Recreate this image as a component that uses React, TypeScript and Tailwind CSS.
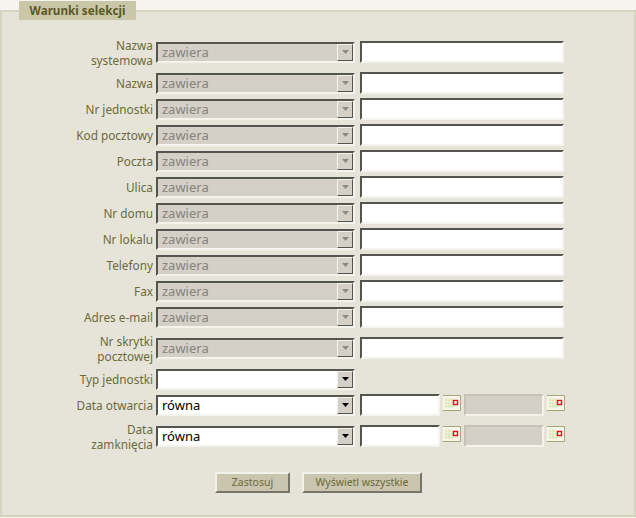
const font = "font-['Noto_Sans',Tahoma,sans-serif]";

function Arrow({ disabled }: { disabled?: boolean }) {
  return (
    <div className="flex h-full w-[16px] items-center justify-center border-t border-l border-t-[#f4f3ee] border-l-[#f4f3ee] border-r border-b border-r-[#55554f] border-b-[#55554f] bg-[#d4d0c8]">
      <svg width="7" height="4" viewBox="0 0 7 4">
        <path d="M0 0h7L3.5 4z" fill={disabled ? "#8d8a86" : "#000"} />
      </svg>
    </div>
  );
}

function Select({ value, disabled }: { value?: string; disabled?: boolean }) {
  return (
    <div
      className={
        "flex h-[21px] w-[199px] items-center justify-between border-2 border-t-[#55554f] border-l-[#55554f] border-r-[#f4f3ee] border-b-[#f4f3ee] pl-[4px] text-[13px] " +
        (disabled ? "bg-[#d4d0c8] text-[#85837c]" : "bg-white text-black")
      }
    >
      <span className="pt-[1px]">{value}</span>
      <Arrow disabled={disabled} />
    </div>
  );
}

function TextInput({ className }: { className: string }) {
  return (
    <div
      className={
        "h-[22px] border-2 border-t-[#55554f] border-l-[#55554f] border-r-[#f4f3ee] border-b-[#f4f3ee] bg-white " + className
      }
    />
  );
}

function CalendarIcon() {
  return (
    <svg width="18" height="16" viewBox="0 0 18 16" className="mb-[4px] shrink-0">
      <rect x="0" y="0" width="17" height="15" fill="#f6f6ea" />
      <path d="M3 3v10M6 3v10M9 3v10M2 5h8M2 8h8M2 11h13" stroke="#d8e4b0" />
      <path d="M0 .5h17.5V15.5H0" fill="none" stroke="#a8a678" />
      <rect x="10.5" y="5.5" width="4" height="4" fill="#fff" stroke="#ff0022" strokeWidth="1.4" />
    </svg>
  );
}

function Row({ label, tall, children }: { label: React.ReactNode; tall?: boolean; children: React.ReactNode }) {
  return (
    <div className={"flex items-center gap-[3px] " + (tall ? "h-[32px]" : "h-[22px]")}>
      <div className="w-[151px] pl-[70px] pt-[1px] text-right text-[11.8px] leading-[15px] text-[#6b6a3a]">{label}</div>
      {children}
    </div>
  );
}

function FullRow({ label, tall }: { label: string; tall?: boolean }) {
  return (
    <Row label={label} tall={tall}>
      <Select value="zawiera" disabled />
      <TextInput className="ml-[2px] w-[204px]" />
    </Row>
  );
}

function DateRow({ label, tall }: { label: string; tall?: boolean }) {
  return (
    <Row label={label} tall={tall}>
      <Select value="równa" />
      <TextInput className="ml-[2px] w-[80px]" />
      <CalendarIcon />
      <div className="h-[22px] w-[80px] border-2 border-t-[#c6c3b6] border-l-[#c6c3b6] border-r-[#f4f3ee] border-b-[#f4f3ee] bg-[#d4d0c8]" />
      <CalendarIcon />
    </Row>
  );
}

function Button({ label, className }: { label: string; className: string }) {
  return (
    <button
      className={
        "h-[21px] border-2 border-t-[#f2f1ea] border-l-[#f2f1ea] border-r-[#77756a] border-b-[#77756a] bg-[#c9c5ae] text-[10.5px] leading-none text-[#6b6a3a] " +
        className
      }
    >
      {label}
    </button>
  );
}

export default function App() {
  return (
    <div className={"h-[518px] w-[636px] overflow-hidden bg-[#f5f4ee] pt-[10px] " + font}>
      <div className="h-[507px] w-[636px] border-2 border-[#d6d3c0] bg-[#e6e4d8]">
        <div className="-mt-[11px] ml-[17px] flex h-[19px] w-[117px] items-center justify-center bg-[#cac7a9] text-[11.7px] font-bold text-[#5a5a25]">
          Warunki selekcji
        </div>
        <div className="mt-[16px] flex flex-col gap-[4px]">
          <FullRow label="Nazwa systemowa" tall />
          <FullRow label="Nazwa" />
          <FullRow label="Nr jednostki" />
          <FullRow label="Kod pocztowy" />
          <FullRow label="Poczta" />
          <FullRow label="Ulica" />
          <FullRow label="Nr domu" />
          <FullRow label="Nr lokalu" />
          <FullRow label="Telefony" />
          <FullRow label="Fax" />
          <FullRow label="Adres e-mail" />
          <FullRow label="Nr skrytki pocztowej" tall />
          <Row label="Typ jednostki">
            <Select />
          </Row>
          <DateRow label="Data otwarcia" />
          <DateRow label="Data zamknięcia" tall />
        </div>
        <div className="mt-[20px] flex gap-[12px] pl-[213px]">
          <Button label="Zastosuj" className="w-[75px]" />
          <Button label="Wyświetl wszystkie" className="w-[120px]" />
        </div>
      </div>
    </div>
  );
}
